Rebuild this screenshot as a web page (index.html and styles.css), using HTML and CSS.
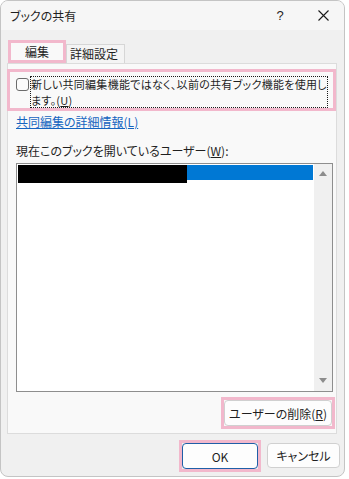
FILE: index.html
```html
<!DOCTYPE html>
<html lang="ja">
<head>
<meta charset="utf-8">
<title>ブックの共有</title>
<link rel="stylesheet" href="styles.css">
</head>
<body>
<div class="window">
  <div class="titlebar">
    <span class="title">ブックの共有</span>
    <span class="tb-btn help">?</span>
    <span class="tb-btn close">
      <svg width="11" height="11" viewBox="0 0 11 11"><path d="M0.5 0.5L10.5 10.5M10.5 0.5L0.5 10.5" stroke="#1a1a1a" stroke-width="1.1" fill="none"/></svg>
    </span>
  </div>
  <div class="body">
    <div class="tabs">
      <div class="tab active">編集</div>
      <div class="tab">詳細設定</div>
    </div>
    <div class="panel">
      <div class="mark check-row">
        <span class="checkbox"></span>
        <span class="check-label">新しい共同編集機能ではなく、以前の共有ブック機能を使用し<br>ます。(<u>U</u>)</span>
      </div>
      <a class="link" href="#">共同編集の詳細情報(L)</a>
      <div class="label">現在このブックを開いているユーザー(<u>W</u>):</div>
      <div class="listbox">
        <div class="list">
          <div class="row selected"><span class="redact"></span></div>
        </div>
        <div class="scrollbar">
          <svg width="8" height="5" viewBox="0 0 8 5"><path d="M0 5L4 0L8 5Z" fill="#8c8c8c"/></svg>
          <svg width="8" height="5" viewBox="0 0 8 5"><path d="M0 0L4 5L8 0Z" fill="#8c8c8c"/></svg>
        </div>
      </div>
      <div class="remove-wrap">
        <div class="mark">
          <button class="btn remove">ユーザーの削除(<u>R</u>)</button>
        </div>
      </div>
    </div>
    <div class="footer">
      <div class="mark">
        <button class="btn ok">OK</button>
      </div>
      <button class="btn cancel">キャンセル</button>
    </div>
  </div>
</div>
</body>
</html>
```
FILE: styles.css
```css
* { box-sizing: border-box; }
html, body { margin: 0; padding: 0; background: #ffffff; }
body {
  font-family: "Noto Sans CJK JP", "Noto Sans", sans-serif;
  font-size: 12px;
  color: #1f1f1f;
  font-feature-settings: "palt";
}
.window {
  width: 345px;
  height: 477px;
  border: 1px solid #c4c4c4;
  border-radius: 8px;
  background: #f0f0f0;
  display: flex;
  flex-direction: column;
  overflow: hidden;
}
.titlebar {
  height: 29px;
  display: flex;
  align-items: center;
  background: #f6f6f6;
  padding-left: 9px;
}
.title { flex: 1; line-height: 18px; }
.tb-btn {
  width: 44px;
  height: 29px;
  display: flex;
  align-items: center;
  justify-content: center;
}
.help { font-family: "Liberation Sans", sans-serif; font-size: 13px; margin-right: -1px; }
.close { margin-right: -1px; }
.body {
  flex: 1;
  display: flex;
  flex-direction: column;
  padding: 10px 7px 0 6px;
}
.tabs {
  display: flex;
  align-items: flex-end;
  height: 23px;
  margin-left: 1px;
}
.tab {
  height: 19px;
  width: 59px;
  line-height: 18px;
  padding-left: 3px;
  border: 1px solid #d6d6d6;
  border-bottom: none;
  background: #f4f4f4;
}
.tab.active {
  height: 23px;
  width: 58px;
  border: 3px solid #f2b8cc;
  background: #f9f9f9;
  text-align: center;
  padding-left: 0;
  line-height: 17px;
  position: relative;
  z-index: 1;
}
.panel {
  height: 371px;
  border: 1px solid #dcdcdc;
  background: #f9f9f9;
  display: flex;
  flex-direction: column;
}
.mark { border: 3px solid #f2b8cc; }
.check-row {
  margin-top: 5px;
  margin-left: -1px;
  height: 42px;
  display: flex;
  align-items: flex-start;
  padding: 4px 0 0 6px;
}
.checkbox {
  width: 13px;
  height: 13px;
  border: 1px solid #6b6b6b;
  border-radius: 3px;
  background: #fbfbfb;
  margin-top: 2px;
  flex: none;
}
.check-label {
  margin-left: 1px;
  width: 298px;
  height: 32px;
  font-size: 11px;
  line-height: 16px;
  padding-left: 1px;
  letter-spacing: 0.28px;
  outline: 1px dotted #1a1a1a;
  outline-offset: -1px;
  white-space: nowrap;
}
.link {
  margin: 2px 0 0 8px;
  color: #1565c0;
  line-height: 18px;
  text-decoration: underline;
  align-self: flex-start;
}
.label {
  margin: 11px 0 0 8px;
  line-height: 18px;
}
.listbox {
  margin: 3px 3px 0 8px;
  height: 229px;
  border: 1px solid #8e8e8e;
  background: #ffffff;
  display: flex;
}
.list { flex: 1; padding: 1px; }
.row { height: 15px; }
.row.selected { background: #0078d4; }
.redact {
  display: block;
  width: 169px;
  height: 18px;
  background: #000000;
}
.scrollbar {
  width: 18px;
  background: #f0f0f0;
  display: flex;
  flex-direction: column;
  justify-content: space-between;
  align-items: center;
  padding: 7px 0 8px;
}
.remove-wrap {
  display: flex;
  justify-content: flex-end;
  margin: 5px 1px 0 0;
}
.btn {
  font-family: "Noto Sans CJK JP", "Noto Sans", sans-serif;
  font-feature-settings: "palt";
  font-size: 12px;
  color: #1f1f1f;
  background: #fdfdfd;
  border: 1px solid #d0d0d0;
  border-radius: 4px;
  padding: 0;
  display: block;
}
.remove { width: 108px; height: 26px; }
.footer {
  display: flex;
  justify-content: flex-end;
  align-items: flex-start;
  gap: 6px;
  margin-top: 6px;
  margin-right: -3px;
}
.ok {
  width: 76px;
  height: 26px;
  border: 1px solid #1f5fa8;
}
.cancel {
  width: 73px;
  height: 25px;
  margin-top: 3px;
}
```
